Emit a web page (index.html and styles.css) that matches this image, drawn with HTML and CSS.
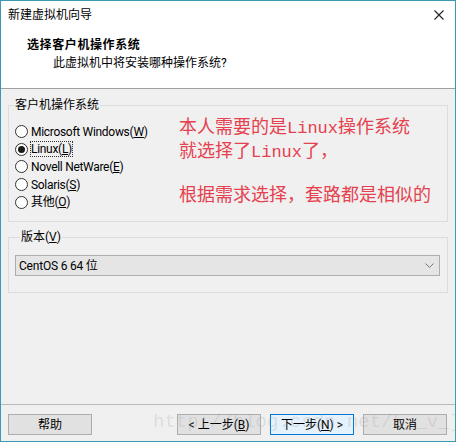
FILE: index.html
```html
<!DOCTYPE html>
<html lang="zh-CN">
<head>
<meta charset="utf-8">
<title>新建虚拟机向导</title>
<link rel="stylesheet" href="styles.css">
</head>
<body>
<div class="window">
  <div class="top">
    <div class="titlebar">
      <span class="title">新建虚拟机向导</span>
      <svg class="close" width="10" height="10" viewBox="0 0 10 10"><path d="M0.5 0.5L9.5 9.5M9.5 0.5L0.5 9.5" stroke="#222" stroke-width="1.1" fill="none"/></svg>
    </div>
    <div class="header">
      <div class="h-title">选择客户机操作系统</div>
      <div class="h-sub">此虚拟机中将安装哪种操作系统?</div>
    </div>
  </div>
  <div class="content">
    <fieldset class="group g-os">
      <legend>客户机操作系统</legend>
      <div class="os-row">
        <div class="radios">
          <div class="radio"><span class="dot"></span><span class="lbl">Microsoft Windows(<u>W</u>)</span></div>
          <div class="radio checked"><span class="dot"></span><span class="lbl focus">Linux(<u>L</u>)</span></div>
          <div class="radio"><span class="dot"></span><span class="lbl">Novell NetWare(<u>E</u>)</span></div>
          <div class="radio"><span class="dot"></span><span class="lbl">Solaris(<u>S</u>)</span></div>
          <div class="radio"><span class="dot"></span><span class="lbl">其他(<u>O</u>)</span></div>
        </div>
        <div class="notes">
          <p>本人需要的是<span class="lat">Linux</span>操作系统<br>就选择了<span class="lat">Linux</span>了，</p>
          <p class="p2">根据需求选择，套路都是相似的</p>
        </div>
      </div>
    </fieldset>
    <fieldset class="group g-ver">
      <legend>版本(<u>V</u>)</legend>
      <div class="select">
        <span>CentOS 6 64 位</span>
        <svg class="chev" width="9" height="5" viewBox="0 0 9 5"><path d="M0.5 0.5L4.5 4.5L8.5 0.5" stroke="#777" stroke-width="1" fill="none"/></svg>
      </div>
    </fieldset>
  </div>
  <div class="footer">
    <button class="btn">帮助</button>
    <div class="right">
      <button class="btn">&lt; 上一步(<u>B</u>)</button>
      <button class="btn default">下一步(<u>N</u>) &gt;</button>
      <button class="btn">取消</button>
    </div>
  </div>
  <div class="watermark">http://blog.csdn.net/L__v_]</div>
</div>
</body>
</html>
```
FILE: styles.css
```css
* { box-sizing: border-box; }
html, body { margin: 0; padding: 0; background: #f0f0f0; }
body {
  font-family: "Roboto", "Noto Sans CJK SC", sans-serif;
  font-size: 12px;
  color: #000;
}
.window {
  position: relative;
  width: 456px;
  height: 442px;
  border: 1px solid #3a9ab4;
  background: #f0f0f0;
  display: flex;
  flex-direction: column;
}
.top {
  background: #fff;
  border-bottom: 1px solid #a0a0a0;
}
.titlebar {
  height: 29px;
  padding: 6px 11px 0 7px;
  display: flex;
  justify-content: space-between;
  align-items: flex-start;
  line-height: 16px;
}
.close { margin-top: 3px; }
.header {
  padding: 7px 0 17px 26px;
  line-height: 16px;
}
.h-title { font-weight: bold; letter-spacing: 0.6px; }
.h-sub { margin-top: 2px; padding-left: 26px; }
.content {
  flex: 1;
  padding: 0 7px;
}
.group {
  margin: 0;
  padding: 0;
  border: 1px solid #dcdcdc;
  min-width: 0;
}
.group legend {
  margin-left: 5px;
  padding: 0 1px;
  line-height: 16px;
  color: #000;
}
.g-os { margin-top: 8px; height: 125px; }
.os-row { display: flex; }
.radios {
  width: 170px;
  padding: 10px 0 0 6px;
  display: flex;
  flex-direction: column;
}
.radio {
  height: 17.6px;
  display: flex;
  align-items: center;
  gap: 2px;
  line-height: 16px;
}
.dot {
  width: 13px;
  height: 13px;
  border: 1px solid #333;
  border-radius: 50%;
  background: #fff;
  display: flex;
  align-items: center;
  justify-content: center;
  flex: none;
}
.radio.checked .dot::after {
  content: "";
  width: 7px;
  height: 7px;
  border-radius: 50%;
  background: #1a1a1a;
}
.lbl { padding: 0; border: 1px dotted transparent; line-height: 14px; letter-spacing: -0.3px; }
.lbl.focus { border-color: #333; }
.notes {
  padding-top: 2px;
  color: #e5414f;
  font-family: "Noto Sans CJK SC", sans-serif;
  font-size: 18px;
  line-height: 20px;
}
.notes p { margin: 0; }
.notes .p2 { margin-top: 20px; }
.notes .lat { font-family: "Liberation Mono", monospace; font-size: 17px; }
.g-ver { margin-top: 7px; padding: 10px 7px 16px 6px; }
.select {
  height: 21px;
  background: #e5e5e5;
  border: 1px solid #adadad;
  display: flex;
  align-items: center;
  justify-content: space-between;
  padding: 0 5px 0 3px;
  line-height: 16px;
  letter-spacing: -0.2px;
}
.footer {
  border-top: 1px solid #b9b9b9;
  padding: 9px 8px 6px 7px;
  display: flex;
  justify-content: space-between;
}
.right { display: flex; gap: 9px; }
.btn {
  width: 84px;
  height: 21px;
  background: #e1e1e1;
  border: 1px solid #adadad;
  font: inherit;
  color: #000;
  padding: 0;
  line-height: 16px;
}
.btn.default { border-color: #0078d7; background: #e5f1fb; }
.watermark {
  position: absolute;
  left: 152px;
  top: 410px;
  font-family: "Liberation Mono", monospace;
  font-size: 19px;
  color: rgba(150, 150, 150, 0.22);
  pointer-events: none;
  white-space: nowrap;
}
```
